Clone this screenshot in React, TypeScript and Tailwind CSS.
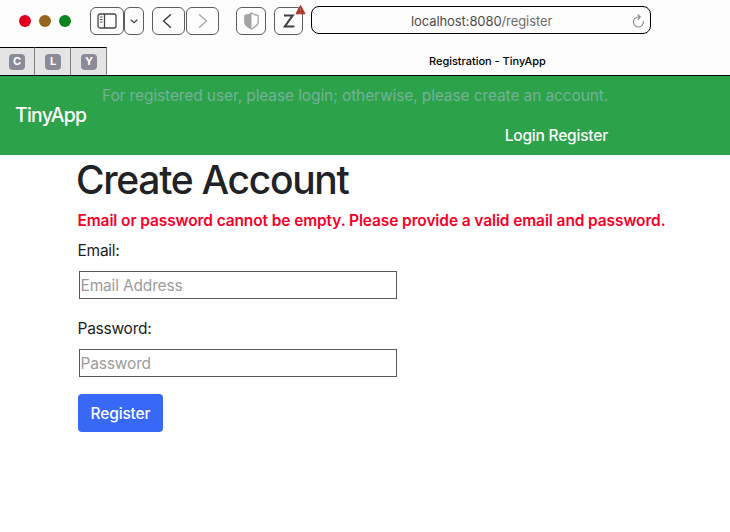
import type { ReactNode } from "react";

function ToolButton({ className, children }: { className: string; children: ReactNode }) {
  return (
    <div
      className={`flex h-7 shrink-0 items-center justify-center rounded-[6px] border border-[#5c5c5c] bg-[#fdfdfd] ${className}`}
    >
      {children}
    </div>
  );
}

function Toolbar() {
  return (
    <div className="flex h-[47px] items-start pl-[19px] pt-[6px]">
      <div className="mt-[9px] flex gap-2">
        <span className="size-3 rounded-full bg-[#e3001f]" />
        <span className="size-3 rounded-full bg-[#956420]" />
        <span className="size-3 rounded-full bg-[#0e8420]" />
      </div>
      <div className="ml-[19px] mt-px flex">
        <ToolButton className="w-[34px]">
          <svg className="-mt-px" width="20" height="16" viewBox="0 0 20 16" fill="none" stroke="#454545">
            <rect x="1" y="1" width="18" height="14" rx="2" strokeWidth="1.3" />
            <path d="M7.5 1v14" strokeWidth="1.3" />
            <path d="M3 4h2.5M3 6.5h2.5M3 9h2.5" strokeWidth="1" />
          </svg>
        </ToolButton>
        <ToolButton className="w-5">
          <svg width="8" height="5" viewBox="0 0 8 5" fill="none" stroke="#454545" strokeWidth="1.2" strokeLinecap="round">
            <path d="M1 1l3 2.7L7 1" />
          </svg>
        </ToolButton>
        <ToolButton className="ml-2 w-[33px]">
          <svg className="-ml-[3px]" width="10" height="16" viewBox="0 0 10 16" fill="none" stroke="#3c3c3c" strokeWidth="1.5" strokeLinecap="round" strokeLinejoin="round">
            <path d="M8.5 1.8L1.5 8l7 6.2" />
          </svg>
        </ToolButton>
        <ToolButton className="ml-px w-[33px]">
          <svg width="10" height="16" viewBox="0 0 10 16" fill="none" stroke="#a9a9a9" strokeWidth="1.5" strokeLinecap="round" strokeLinejoin="round">
            <path d="M1.5 1.8l7 6.2-7 6.2" />
          </svg>
        </ToolButton>
        <ToolButton className="ml-[17px] w-[30px]">
          <svg width="15" height="18" viewBox="0 0 15 18">
            <path d="M7.5 1C6 2.3 4 3 1.5 3.2c-.4 0-.7.3-.7.7v6C.8 13 4 15.2 7.5 17c3.5-1.8 6.7-4 6.7-7.1v-6c0-.4-.3-.7-.7-.7C11 3 9 2.3 7.5 1z" fill="none" stroke="#a4a4a4" strokeWidth="1.3" />
            <path d="M7.5 1C6 2.3 4 3 1.5 3.2c-.4 0-.7.3-.7.7v6C.8 13 4 15.2 7.5 17z" fill="#a4a4a4" />
          </svg>
        </ToolButton>
        <ToolButton className="relative ml-2 w-[29px]">
          <svg className="-mt-px" width="12" height="14" viewBox="0 0 12 14" fill="none" stroke="#3f3f3f" strokeWidth="2.1" strokeLinejoin="miter">
            <path d="M1 1.5h8.7L1.8 12.5h9.5" />
          </svg>
          <svg className="absolute -right-[4px] -top-[4px]" width="11" height="11" viewBox="0 0 11 11">
            <path d="M5.5 1.5L10 9.8H1z" fill="#ab3424" stroke="#ab3424" strokeWidth="1" strokeLinejoin="round" />
            <path d="M5.5 4v3M5.5 8v1" stroke="#c96c60" strokeWidth="1" />
          </svg>
        </ToolButton>
      </div>
      <div className="ml-2 flex h-7 w-[340px] items-center rounded-[8px] border border-black bg-[#fdfdfd] pr-[5px]">
        <span className="ml-[99px] mt-[3px] whitespace-nowrap text-[13px] tracking-[-0.09px] text-[#4c4c4c]">
          localhost:8080<span className="text-[#6c6c6c]">/register</span>
        </span>
        <svg className="ml-auto mt-px" width="13" height="14" viewBox="0 0 13 14" fill="none" stroke="#858585" strokeWidth="1.1" strokeLinecap="round" strokeLinejoin="round">
          <path d="M11.3 7.2A5 5 0 1 1 6.3 3H8M6 .8L8.3 3 6 5.3" />
        </svg>
      </div>
    </div>
  );
}

function PinnedTab({ letter, className }: { letter: string; className: string }) {
  return (
    <div className={`flex h-full items-center border-r border-t border-r-[#808080] border-t-black bg-[#e4e4e4] ${className}`}>
      <span className="flex size-4 items-center justify-center rounded-[4px] bg-[#8b8a97] text-[11px] font-bold leading-none text-white">
        {letter}
      </span>
    </div>
  );
}

function TabBar() {
  return (
    <div className="flex h-[29px] border-b border-black">
      <PinnedTab letter="C" className="w-[35px] pl-[9px]" />
      <PinnedTab letter="L" className="w-9 pl-[10px]" />
      <PinnedTab letter="Y" className="w-9 pl-[10px]" />
      <div className="flex flex-1 items-center pl-[322px] text-[11px] font-medium text-black">
        <span className="whitespace-nowrap tracking-[-0.02px]">Registration - TinyApp</span>
      </div>
    </div>
  );
}

function Field({ label, placeholder, type }: { label: string; placeholder: string; type: string }) {
  return (
    <div>
      <label className="ml-[0.5px] block h-6 text-[15.5px] leading-[26px] tracking-[-0.25px]">{label}</label>
      <input
        type={type}
        placeholder={placeholder}
        className="ml-[2px] mt-[9px] block h-7 w-[318px] border border-[#5a5a5a] bg-white px-0 pl-[0.5px] text-[15.5px] tracking-[-0.16px] placeholder:text-[#9c9c9c]"
      />
    </div>
  );
}

export default function App() {
  return (
    <div className="h-[532px] w-[730px] overflow-hidden bg-white font-['Inter',sans-serif] text-[#212226]">
      <div className="bg-[#fdfdfd]">
        <Toolbar />
        <TabBar />
      </div>
      <nav className="flex h-[79px] items-start bg-[#2ca24a] pl-[15px] pt-2 text-white">
        <span className="mt-[17px] w-[87px] whitespace-nowrap text-[19.4px] font-[450] leading-7 tracking-[-0.75px]">TinyApp</span>
        <div className="flex w-[506px] flex-col gap-4 text-[15.5px]">
          <span className="whitespace-nowrap leading-6 tracking-[-0.11px] text-[#74b198]">
            For registered user, please login; otherwise, please create an account.
          </span>
          <span className="self-end whitespace-nowrap font-medium leading-6 tracking-[-0.2px]">Login Register</span>
        </div>
      </nav>
      <main className="pl-[77px] pt-px">
        <h1 className="-ml-px text-[39px] font-[550] leading-[48px] tracking-[-1.3px]">Create Account</h1>
        <p className="ml-[0.5px] mt-1 h-6 whitespace-nowrap text-[15.5px] font-semibold leading-[26px] tracking-[-0.11px] text-[#f50029]">
          Email or password cannot be empty. Please provide a valid email and password.
        </p>
        <form className="mt-[6px] flex flex-col gap-[17px]">
          <Field label="Email:" placeholder="Email Address" type="email" />
          <Field label="Password:" placeholder="Password" type="password" />
          <button
            type="button"
            className="ml-px flex h-[38px] w-[85px] items-center justify-center rounded-[4px] bg-[#3868f6] pt-px text-[15.5px] font-medium tracking-[-0.15px] text-white"
          >
            Register
          </button>
        </form>
      </main>
    </div>
  );
}
